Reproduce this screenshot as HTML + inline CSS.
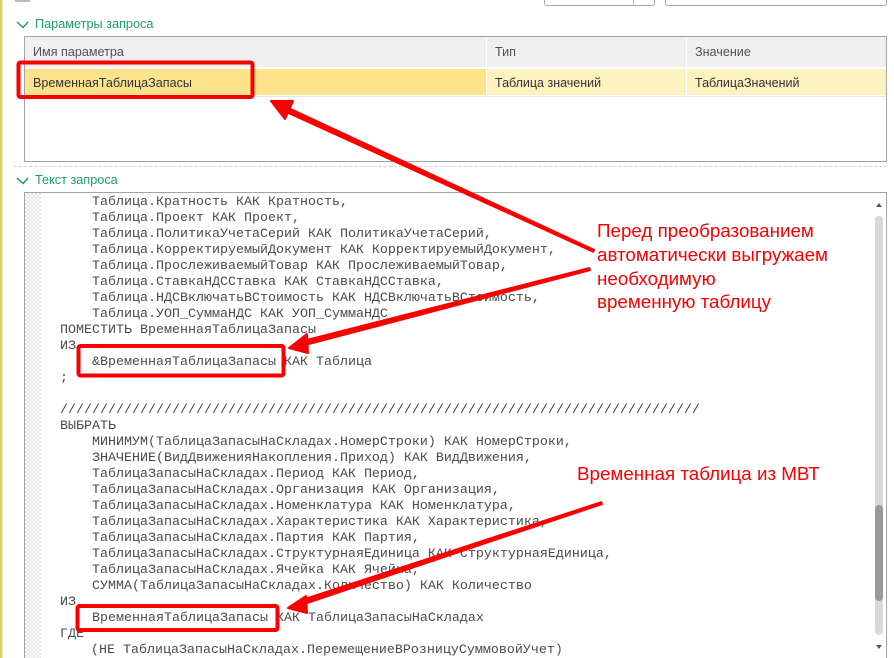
<!DOCTYPE html>
<html lang="ru">
<head>
<meta charset="utf-8">
<title>Параметры запроса</title>
<style>
html,body{margin:0;padding:0;background:#fff}
#p{position:relative;width:894px;height:658px;overflow:hidden;background:#fff;font-family:"Liberation Sans",sans-serif}
#p div{position:absolute;box-sizing:border-box}
.s{font-size:12.7px;line-height:16px;white-space:nowrap;color:#1a9c6e}
.h{font-size:12.6px;line-height:16px;white-space:nowrap;color:#4f4f5a}
.c{font-size:12.6px;line-height:16px;white-space:nowrap;color:#333}
#code{left:0;top:2px;font-family:"Liberation Mono",monospace;font-size:13.33px;line-height:16px;color:#4a4a4a}
#code div{white-space:pre;height:16px}
.r{font-size:18.8px;line-height:24px;color:#fb0000;white-space:nowrap}
svg{position:absolute;left:0;top:0}
</style>
</head>
<body>
<div id="p">
<div style="left:0;top:0;width:2px;height:658px;background:#dccb63"></div>
<div style="left:2px;top:0;width:1px;height:658px;background:#f3eec8"></div>
<div style="left:15px;top:0;width:15px;height:2px;background:#bbb"></div>
<div style="left:544px;top:-6px;width:111px;height:12px;border:1px solid #a8a8a8;border-radius:3px"></div>
<div style="left:633px;top:0;width:1px;height:5px;background:#bbb"></div>
<div style="left:665px;top:-6px;width:222px;height:12px;border:1px solid #a8a8a8;border-radius:3px"></div>

<div class="s" style="left:35px;top:16px">Параметры запроса</div>
<div style="left:24px;top:36px;width:863px;height:126px;border:1px solid #a3a3a3;background:#fff"></div>
<div style="left:25px;top:37px;width:461px;height:30px;background:#f0f0f0"></div>
<div style="left:487px;top:37px;width:199px;height:30px;background:#f0f0f0"></div>
<div style="left:687px;top:37px;width:199px;height:30px;background:#f0f0f0"></div>
<div style="left:25px;top:69px;width:461px;height:26px;background:#fde28c"></div>
<div style="left:487px;top:69px;width:199px;height:26px;background:#fdf1c0"></div>
<div style="left:687px;top:69px;width:199px;height:26px;background:#fdf1c0"></div>
<div style="left:25px;top:96px;width:861px;height:1px;background:#e6e6e6"></div>
<div class="h" style="left:33px;top:44px">Имя параметра</div>
<div class="h" style="left:495px;top:44px">Тип</div>
<div class="h" style="left:695px;top:44px">Значение</div>
<div class="c" style="left:33px;top:75px">ВременнаяТаблицаЗапасы</div>
<div class="c" style="left:495px;top:75px;font-size:12.5px">Таблица значений</div>
<div class="c" style="left:695px;top:75px;font-size:12.5px">ТаблицаЗначений</div>

<div style="left:14px;top:166px;width:873px;height:0;border-top:1px dashed #d2d2d2"></div>
<div class="s" style="left:35px;top:172px">Текст запроса</div>

<div style="left:24px;top:192px;width:863px;height:480px;border:1px solid #a3a3a3;background:#fff"></div>
<div style="left:25px;top:193px;width:16px;height:465px;background-color:#fff;background-image:linear-gradient(45deg,#e4e4e4 25%,transparent 25%,transparent 75%,#e4e4e4 75%),linear-gradient(45deg,#e4e4e4 25%,transparent 25%,transparent 75%,#e4e4e4 75%);background-size:4px 4px;background-position:0 0,2px 2px"></div>

<div id="code">
<div style="left:92px;top:193px">Таблица.Кратность КАК Кратность,</div>
<div style="left:92px;top:209px">Таблица.Проект КАК Проект,</div>
<div style="left:92px;top:225px">Таблица.ПолитикаУчетаСерий КАК ПолитикаУчетаСерий,</div>
<div style="left:92px;top:241px">Таблица.КорректируемыйДокумент КАК КорректируемыйДокумент,</div>
<div style="left:92px;top:257px">Таблица.ПрослеживаемыйТовар КАК ПрослеживаемыйТовар,</div>
<div style="left:92px;top:273px">Таблица.СтавкаНДССтавка КАК СтавкаНДССтавка,</div>
<div style="left:92px;top:289px">Таблица.НДСВключатьВСтоимость КАК НДСВключатьВСтоимость,</div>
<div style="left:92px;top:305px">Таблица.УОП_СуммаНДС КАК УОП_СуммаНДС</div>
<div style="left:60px;top:321px">ПОМЕСТИТЬ ВременнаяТаблицаЗапасы</div>
<div style="left:60px;top:337px">ИЗ</div>
<div style="left:92px;top:353px">&amp;ВременнаяТаблицаЗапасы КАК Таблица</div>
<div style="left:60px;top:369px">;</div>
<div style="left:60px;top:401px">////////////////////////////////////////////////////////////////////////////////</div>
<div style="left:60px;top:417px">ВЫБРАТЬ</div>
<div style="left:92px;top:433px">МИНИМУМ(ТаблицаЗапасыНаСкладах.НомерСтроки) КАК НомерСтроки,</div>
<div style="left:92px;top:449px">ЗНАЧЕНИЕ(ВидДвиженияНакопления.Приход) КАК ВидДвижения,</div>
<div style="left:92px;top:465px">ТаблицаЗапасыНаСкладах.Период КАК Период,</div>
<div style="left:92px;top:481px">ТаблицаЗапасыНаСкладах.Организация КАК Организация,</div>
<div style="left:92px;top:497px">ТаблицаЗапасыНаСкладах.Номенклатура КАК Номенклатура,</div>
<div style="left:92px;top:513px">ТаблицаЗапасыНаСкладах.Характеристика КАК Характеристика,</div>
<div style="left:92px;top:529px">ТаблицаЗапасыНаСкладах.Партия КАК Партия,</div>
<div style="left:92px;top:545px">ТаблицаЗапасыНаСкладах.СтруктурнаяЕдиница КАК СтруктурнаяЕдиница,</div>
<div style="left:92px;top:561px">ТаблицаЗапасыНаСкладах.Ячейка КАК Ячейка,</div>
<div style="left:92px;top:577px">СУММА(ТаблицаЗапасыНаСкладах.Количество) КАК Количество</div>
<div style="left:60px;top:593px">ИЗ</div>
<div style="left:92px;top:609px">ВременнаяТаблицаЗапасы КАК ТаблицаЗапасыНаСкладах</div>
<div style="left:60px;top:625px">ГДЕ</div>
<div style="left:91px;top:641px">(НЕ ТаблицаЗапасыНаСкладах.ПеремещениеВРозницуСуммовойУчет)</div>
</div>

<div style="left:875px;top:216px;width:8px;height:419px;background:#d8d8d8;border-radius:4px"></div>
<div style="left:875px;top:505px;width:8px;height:96px;background:#9a9a9a;border-radius:4px"></div>

<svg width="894" height="658" viewBox="0 0 894 658">
<path d="M17 22 L23 27.500 L28 22" fill="none" stroke="#1a9c6e" stroke-width="1.5"/>
<path d="M17 178 L23 183.500 L28 178" fill="none" stroke="#1a9c6e" stroke-width="1.5"/>
<path d="M876 207 L879 203 L882 207 Z" fill="#555"/>
<path d="M876 645 L882 645 L879 649 Z" fill="#555"/>
<g fill="none" stroke="#fb0000" stroke-width="4" stroke-linejoin="round">
<rect x="18.5" y="62.5" width="234" height="34.5" rx="2"/>
<rect x="78.500" y="346" width="205" height="29.500" rx="2"/>
<rect x="77.500" y="606" width="200" height="24" rx="2"/>
</g>
<g fill="#fb0000" stroke="#fb0000" stroke-width="1" stroke-linejoin="round">
<path d="M593.400 252.400 L594.600 249.600 L284.100 105.500 L281.900 110.500 Z"/>
<path d="M590.400 270.500 L589.600 267.500 L299.300 341.300 L300.700 346.700 Z"/>
<path d="M602.500 504.400 L601.500 501.600 L299.100 600.400 L300.900 605.600 Z"/>
</g>
<g fill="#fb0000" stroke="#fb0000" stroke-width="2" stroke-linejoin="round">
<path d="M271 101 L293 101 L285 119 Z"/>
<path d="M289 348 L307 334 L308 353 Z"/>
<path d="M288 608 L306 596 L307 613 Z"/>
</g>
</svg>

<div class="r" style="left:597px;top:219px">Перед преобразованием</div>
<div class="r" style="left:597px;top:243px">автоматически выгружаем</div>
<div class="r" style="left:597px;top:267px">необходимую</div>
<div class="r" style="left:597px;top:290px">временную таблицу</div>
<div class="r" style="left:577px;top:462px">Временная таблица из МВТ</div>
</div>
</body>
</html>
